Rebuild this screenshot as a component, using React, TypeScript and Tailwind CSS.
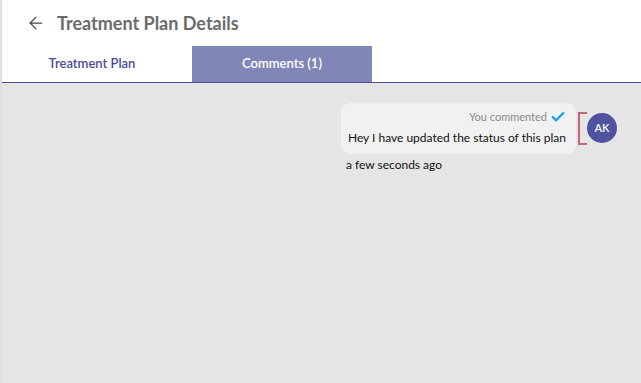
import { ArrowLeft, Check } from 'lucide-react';

export default function App() {
  return (
    <div
      className="flex h-[383px] w-[641px] bg-[#e0e0e0] pl-[2px]"
      style={{ fontFamily: 'Lato, "Open Sans", sans-serif' }}
    >
      <div className="flex flex-1 flex-col bg-[#e5e5e5]">
        <div className="bg-white">
          <div className="flex h-[46px] items-center pl-[24px]">
            <ArrowLeft className="h-[20px] w-[20px] text-[#444]" strokeWidth={1.5} />
            <h1 className="ml-[11px] text-[18px] font-bold text-[#6b6b6b]">Treatment Plan Details</h1>
          </div>
          <div className="flex h-[37px] border-b border-[#4a4f96]">
            <button className="flex w-[180px] items-center justify-center text-[13px] font-semibold text-[#4b4a9a]">
              Treatment Plan
            </button>
            <button className="ml-[10px] flex w-[180px] items-center justify-center bg-[#8087b8] text-[13px] font-semibold text-white">
              Comments (1)
            </button>
          </div>
        </div>

        <div className="flex justify-end pr-[24px] pt-[20px]">
          <div className="flex flex-col items-start">
            <div className="flex items-center">
              <div className="rounded-[9px] bg-[#f1f1f1] pl-[7px] pr-[10px] pt-[6px] pb-[7px]">
                <div className="flex items-center justify-end gap-[3px] text-[11px] text-[#8a8a8a]">
                  You commented
                  <Check className="h-[16px] w-[16px] text-[#1ea1e0]" strokeWidth={3.5} />
                </div>
                <p className="mt-[3px] text-[12px] text-[#111]">Hey I have updated the status of this plan</p>
              </div>
              <div className="ml-[2px] h-[33px] w-[9px] border-y-2 border-l-2 border-[#c4667c]" />
              <div className="flex h-[30px] w-[30px] items-center justify-center rounded-full bg-[#4f52a0] text-[11px] font-semibold text-white">
                AK
              </div>
            </div>
            <span className="mt-[2px] pl-[5px] text-[12px] text-[#111]">a few seconds ago</span>
          </div>
        </div>
      </div>
    </div>
  );
}
